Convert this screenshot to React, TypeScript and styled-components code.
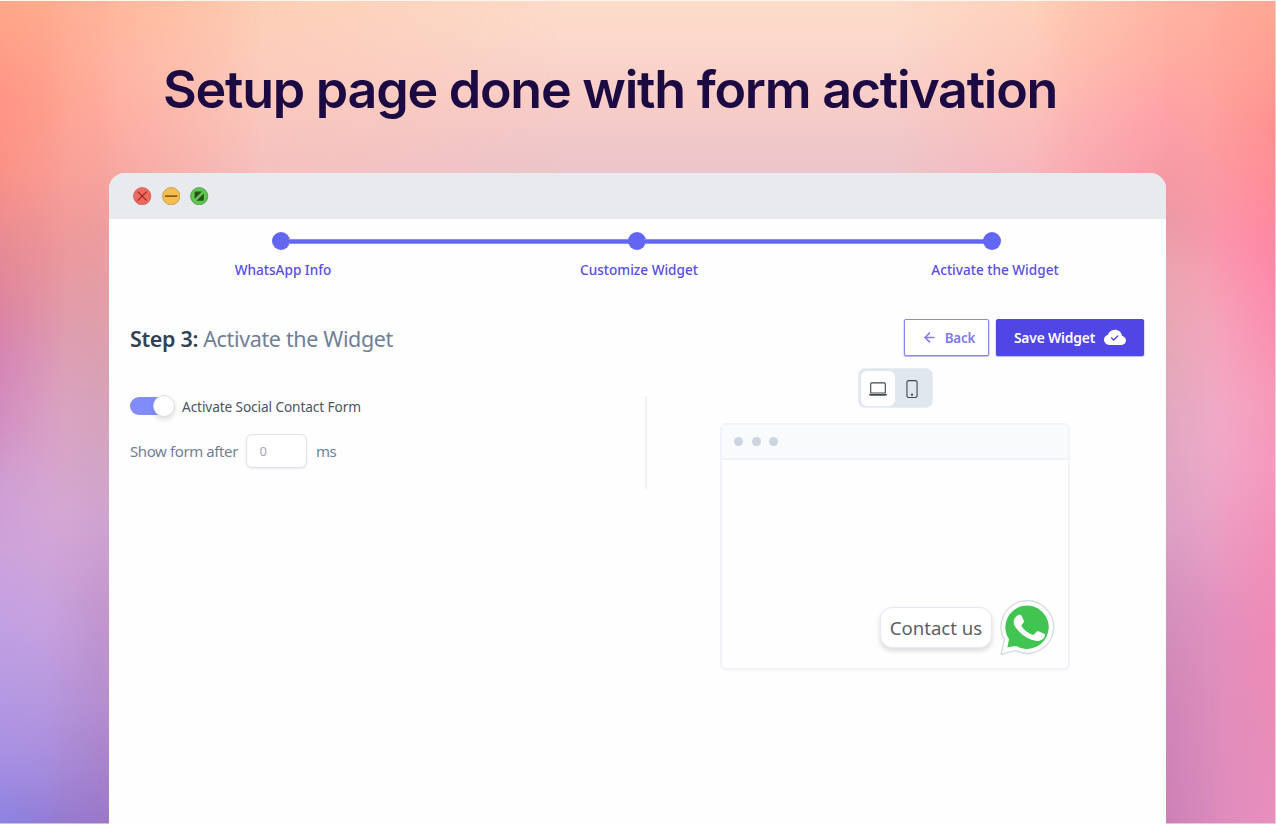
import React, { useState } from "react";
import styled, { createGlobalStyle } from "styled-components";
import { BsCloudCheckFill, BsLaptop, BsPhone } from "react-icons/bs";
import { ArrowLeft } from "lucide-react";

const GlobalStyle = createGlobalStyle`
  * { box-sizing: border-box; }
  body {
    margin: 0;
    overflow: hidden;
    font-family: "Noto Sans", "Open Sans", sans-serif;
  }
`;

const Page = styled.div`
  position: relative;
  width: 1276px;
  height: 824px;
  overflow: hidden;
  display: flex;
  flex-direction: column;
  background: linear-gradient(#fddcc8 0, #fbd8cb 40px, #f8cdc8 100px, #ecc4ca 175px);
  isolation: isolate;

  &::after {
    content: "";
    position: absolute;
    inset: 0;
    border: solid rgba(255, 255, 255, 0.5);
    border-width: 0 1px 1px 0;
    border-top: 1px solid #fff6f2;
  }
`;

const Glow = styled.div<{ $paint: string; $fade: string }>`
  position: absolute;
  inset: 0;
  z-index: -1;
  background: linear-gradient(${(p) => p.$paint});
  mask-image: linear-gradient(${(p) => p.$fade});
`;

const glows = [
  { paint: "#fdcdb2 0, #fccabb 80px, #f6bfbc 175px", fade: "90deg, #000 220px, transparent 560px" },
  {
    paint:
      "#ffb698 0, #ffb3a0 60px, #feab9f 120px, #f6a49e 180px, #ee9d9e 230px, #e29fa7 300px, #d9a0b0 360px, #d2a3c0 450px, #cda2cf 520px, #c193cc 610px, #b48ccd 700px, #9a76c6 824px",
    fade: "90deg, #000 100px, transparent 260px",
  },
  {
    paint:
      "#ffad90 0, #fea28f 100px, #f99e96 180px, #ec979b 250px, #df9caf 330px, #dba4c3 410px, #d7a9d5 510px, #c8a2de 620px, #b798de 700px, #a68bdb 770px, #957bd2 824px",
    fade: "90deg, #000 45px, transparent 115px",
  },
  {
    paint:
      "#ffa789 0, #ff9485 100px, #fa9286 170px, #e88b92 240px, #dc84a0 310px, #d585b5 360px, #d28fc0 420px, #cf9dd2 480px, #cda2da 550px, #c2a0e2 620px, #b79be2 680px, #aa91e3 750px, #8b82e0 824px",
    fade: "90deg, #000 0, transparent 65px",
  },
  { paint: "#ffceb6 0, #fdc3b6 80px, #f9b1b8 175px", fade: "270deg, #000 206px, transparent 380px" },
  {
    paint:
      "#ffb6a3 0, #ffada2 60px, #ffa2a8 110px, #f79ba5 170px, #eb9aa5 220px, #eba5b0 270px, #e5a8b7 350px, #e0a8c0 420px, #dda2c6 520px, #d492bd 600px, #d086b8 700px, #cc80b5 824px",
    fade: "270deg, #000 110px, transparent 240px",
  },
  {
    paint:
      "#ffae9c 0, #fea39c 100px, #fb9aa4 180px, #fb97ae 240px, #f6a5bb 320px, #f3aac7 400px, #f2aac9 450px, #ea9fc4 540px, #e291bf 620px, #e08fbd 700px, #dd8cbd 824px",
    fade: "270deg, #000 50px, transparent 112px",
  },
  {
    paint:
      "#ffa693 0, #fe9f92 60px, #ff9090 130px, #ff8a9a 200px, #fd87a8 260px, #fa8fb0 330px, #f699b8 400px, #f598bd 470px, #f18fb8 550px, #ef8ab6 640px, #e98cb7 720px, #e88fbd 824px",
    fade: "270deg, #000 0, transparent 65px",
  },
];

const Headline = styled.h1`
  margin: 58px 0 0 163px;
  height: 115px;
  font: 600 52px/64px Inter, sans-serif;
  letter-spacing: -1.25px;
  color: #1c0a43;
  white-space: nowrap;
`;

const Window = styled.main`
  width: 1057px;
  flex: 1;
  margin-left: 109px;
  border-radius: 16px 16px 0 0;
  overflow: hidden;
  background: #fefefe;
`;

const TitleBar = styled.div`
  height: 46px;
  padding: 0 24.4px;
  display: flex;
  align-items: center;
  gap: 10px;
  background: #e8eaed;
`;

const Stepper = styled.nav`
  height: 69px;
  padding-top: 13px;
`;

const Track = styled.div`
  display: flex;
  align-items: center;
  padding: 0 165px 0 163px;
`;

const Dot = styled.span`
  width: 18px;
  height: 18px;
  border-radius: 50%;
  background: #6366f1;
`;

const Line = styled.span`
  flex: 1;
  height: 5px;
  margin: 0 -2px;
  background: #6366f1;
  border: solid #8b8df5;
  border-width: 1px 0;
`;

const StepLabels = styled.div`
  display: flex;
  justify-content: space-between;
  padding: 10px 106px 0 109px;
`;

const StepLabel = styled.span`
  width: 130px;
  text-align: center;
  font-size: 13.6px;
  font-weight: 500;
  line-height: 20px;
  color: #584de6;
  white-space: nowrap;
`;

const Header = styled.header`
  display: flex;
  align-items: flex-start;
  justify-content: space-between;
  padding: 31px 22px 0 21px;
`;

const StepTitle = styled.h2`
  margin: 5px 0 0;
  font-size: 21.5px;
  line-height: 30px;
  font-weight: 400;
  letter-spacing: -0.35px;
  color: #718096;
  white-space: nowrap;

  b {
    font-weight: 600;
    color: #334155;
  }
`;

const Actions = styled.div`
  display: flex;
  gap: 7px;
`;

const Button = styled.button<{ $primary?: boolean }>`
  height: 37px;
  width: ${(p) => (p.$primary ? 148 : 85)}px;
  padding: 0;
  display: flex;
  align-items: center;
  justify-content: center;
  gap: ${(p) => (p.$primary ? 9 : 8)}px;
  padding-left: ${(p) => (p.$primary ? 0 : 4)}px;
  border: 1.5px solid ${(p) => (p.$primary ? "#4f46e5" : "#8b87f2")};
  border-radius: 2px;
  background: ${(p) => (p.$primary ? "#4f46e5" : "#fff")};
  box-shadow: 0 0.5px 0 0.5px rgba(99, 91, 235, 0.4);
  color: ${(p) => (p.$primary ? "#fff" : "#7d79ef")};
  font: 600 ${(p) => (p.$primary ? 13.8 : 13.4)}px/20px "Noto Sans", sans-serif;
  letter-spacing: -0.15px;
  white-space: nowrap;
`;

const Body = styled.div`
  display: flex;
  padding-left: 21px;
`;

const Settings = styled.section`
  width: 517px;
  height: 93px;
  margin-top: 40px;
  border-right: 2px solid #eff1f5;
`;

const ToggleRow = styled.label`
  display: flex;
  align-items: center;
  gap: 8px;
  height: 20px;
  font-size: 13.7px;
  letter-spacing: -0.12px;
  color: #4b5563;
  white-space: nowrap;
`;

const Switch = styled.span`
  width: 44px;
  height: 18px;
  display: flex;
  align-items: center;
  justify-content: flex-end;
  border-radius: 9px;
  background: #818cf8;
`;

const Knob = styled.span`
  flex: none;
  width: 22px;
  height: 22px;
  margin-right: -1px;
  border: 1px solid #d7dee8;
  border-radius: 50%;
  background: #fff;
  box-shadow: 0 3px 5px rgba(0, 0, 0, 0.12);
`;

const DelayRow = styled.div`
  display: flex;
  align-items: center;
  margin-top: 18px;
  gap: 8.5px;
  font-size: 15px;
  letter-spacing: -0.4px;
  color: #718096;
  white-space: nowrap;
`;

const DelayInput = styled.input`
  width: 61px;
  height: 34px;
  padding: 0 12px;
  border: 1.5px solid #dde4ed;
  border-radius: 6px;
  background: #fff;
  box-shadow: 0 1px 2px rgba(0, 0, 0, 0.08);
  font: 400 13px "Noto Sans", sans-serif;
  color: #a0a8b8;
`;

const Preview = styled.section`
  width: 350px;
  margin: 12px 0 0 73px;
  display: flex;
  flex-direction: column;
  align-items: center;
`;

const DeviceSwitch = styled.div`
  display: flex;
  width: 75px;
  height: 40px;
  padding: 2px;
  border: 1px solid #e9eef5;
  border-radius: 7px;
  background: #e0e7ef;
`;

const DeviceButton = styled.button<{ $active: boolean }>`
  width: 35px;
  height: 35px;
  padding: 0;
  display: grid;
  place-items: center;
  border: 0;
  border-radius: 6px;
  background: ${(p) => (p.$active ? "#fff" : "transparent")};
  color: #3f4852;
`;

const Mock = styled.div`
  width: 350px;
  height: 247px;
  margin-top: 15px;
  display: flex;
  flex-direction: column;
  border: 2px solid #f0f3f8;
  border-radius: 6px;
  box-shadow: 0 1px 2px rgba(0, 0, 0, 0.03);
`;

const MockBar = styled.div`
  height: 35px;
  padding: 0 12.4px;
  display: flex;
  align-items: center;
  gap: 8.5px;
  border-bottom: 2px solid #eff2f7;
  background: #f8fafc;
`;

const MockDot = styled.span`
  width: 9px;
  height: 9px;
  border-radius: 50%;
  background: #cbd5e1;
`;

const MockContent = styled.div`
  flex: 1;
  display: flex;
  align-items: flex-end;
  justify-content: flex-end;
  gap: 8px;
  padding: 0 12px 12px 0;
`;

const Bubble = styled.div`
  width: 112px;
  height: 41px;
  margin-bottom: 8px;
  display: grid;
  place-items: center;
  border: 1px solid #e5e9f2;
  border-radius: 12px;
  background: #fff;
  box-shadow: 0 3px 5px rgba(0, 0, 0, 0.14);
  font-size: 18.6px;
  color: #5c5f64;
  white-space: nowrap;
`;

function WindowControl({ kind }: { kind: "close" | "minimize" | "zoom" }) {
  const fill = { close: "#ed6a5e", minimize: "#f5bf4f", zoom: "#61c554" }[kind];
  const edge = { close: "#c9625b", minimize: "#c49b4b", zoom: "#579d50" }[kind];
  return (
    <svg width="18.4" height="18.4" viewBox="0 0 18.4 18.4">
      <circle cx="9.2" cy="9.2" r="8.6" fill={fill} stroke={edge} strokeWidth="0.9" />
      {kind === "close" && (
        <path d="M4.7 4.7l9 9M13.7 4.7l-9 9" stroke="#9c2418" strokeWidth="1.1" />
      )}
      {kind === "minimize" && <path d="M3 9.2h12.4" stroke="#8f591d" strokeWidth="1.7" />}
      {kind === "zoom" && (
        <path d="M4.6 12V5.6a1 1 0 0 1 1-1H12zM13.8 6.4v6.4a1 1 0 0 1-1 1H6.4z" fill="#285017" />
      )}
    </svg>
  );
}

function WhatsAppIcon() {
  return (
    <svg width="56" height="56" viewBox="0 0 56 56">
      <path
        d="M1 54.3 4.4 39.9A26.3 26.3 0 1 1 15.7 50.6Z"
        fill="#fff"
        stroke="#d3dadd"
        strokeWidth="1.3"
        strokeLinejoin="round"
      />
      <path d="M7.4 47.3 9 39.3A21.7 21.7 0 1 1 16 45.9Z" fill="#41c452" />
      <path
        transform="translate(-4 -.3) scale(1.12 1.02)"
        d="M19.2 15.6c.8-.8 1.9-.9 2.8-.6.7.2 1 1.1 1.4 2l1.5 3.8c.3.7.1 1.3-.4 1.9l-1.4 1.8c-.5.6-.5 1.1-.1 1.8 2.5 4 5.4 6.3 9.5 8 .7.3 1.2.2 1.7-.4l2-2.5c.5-.6 1-.7 1.7-.4l4.6 2.2c.8.4 1.2.7 1.2 1.2-.1 3.7-2.8 5.7-6.1 6-2.4.2-4.8-.7-8-2.1-6-2.7-10.1-7.7-12.5-12-2.5-4.5-1.2-8.1 2.1-10.7Z"
        fill="#fff"
      />
    </svg>
  );
}

const steps = ["WhatsApp Info", "Customize Widget", "Activate the Widget"];

export default function App() {
  const [device, setDevice] = useState<"desktop" | "mobile">("desktop");
  const [delay, setDelay] = useState("0");

  return (
    <Page>
      <GlobalStyle />
      {glows.map((g) => (
        <Glow key={g.paint} $paint={g.paint} $fade={g.fade} />
      ))}
      <Headline>Setup page done with form activation</Headline>
      <Window>
        <TitleBar>
          <WindowControl kind="close" />
          <WindowControl kind="minimize" />
          <WindowControl kind="zoom" />
        </TitleBar>
        <Stepper>
          <Track>
            {steps.map((s, i) => (
              <React.Fragment key={s}>
                {i > 0 && <Line />}
                <Dot />
              </React.Fragment>
            ))}
          </Track>
          <StepLabels>
            {steps.map((s) => (
              <StepLabel key={s}>{s}</StepLabel>
            ))}
          </StepLabels>
        </Stepper>
        <Header>
          <StepTitle>
            <b>Step 3:</b> Activate the Widget
          </StepTitle>
          <Actions>
            <Button>
              <ArrowLeft size={15} strokeWidth={2.4} />
              Back
            </Button>
            <Button $primary>
              Save Widget
              <BsCloudCheckFill size={22} />
            </Button>
          </Actions>
        </Header>
        <Body>
          <Settings>
            <ToggleRow>
              <Switch>
                <Knob />
              </Switch>
              Activate Social Contact Form
            </ToggleRow>
            <DelayRow>
              Show form after
              <DelayInput value={delay} onChange={(e) => setDelay(e.target.value)} />
              ms
            </DelayRow>
          </Settings>
          <Preview>
            <DeviceSwitch>
              <DeviceButton $active={device === "desktop"} onClick={() => setDevice("desktop")}>
                <BsLaptop size={18} />
              </DeviceButton>
              <DeviceButton $active={device === "mobile"} onClick={() => setDevice("mobile")}>
                <BsPhone size={18} />
              </DeviceButton>
            </DeviceSwitch>
            <Mock>
              <MockBar>
                <MockDot />
                <MockDot />
                <MockDot />
              </MockBar>
              <MockContent>
                <Bubble>Contact us</Bubble>
                <WhatsAppIcon />
              </MockContent>
            </Mock>
          </Preview>
        </Body>
      </Window>
    </Page>
  );
}
